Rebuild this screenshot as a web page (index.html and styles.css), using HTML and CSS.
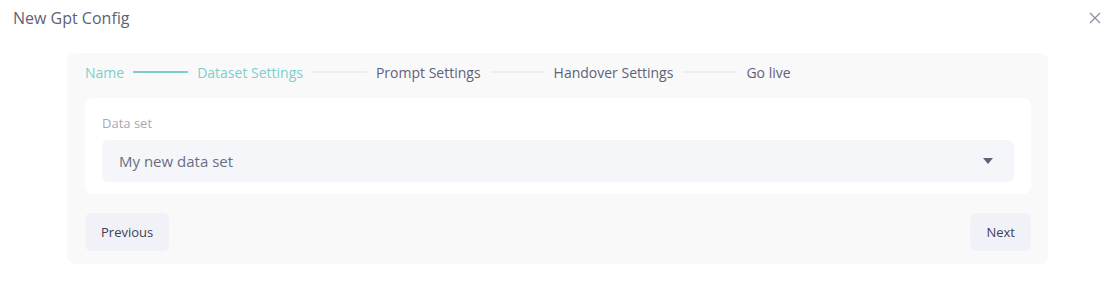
FILE: index.html
```html
<!DOCTYPE html>
<html lang="en">
<head>
  <meta charset="UTF-8" />
  <title>New Gpt Config</title>
  <link rel="stylesheet" href="styles.css">
</head>
<body>
  <div class="modal">
    <div class="modal-head">
      <h2 class="modal-title">New Gpt Config</h2>
      <button class="close-btn" aria-label="Close">
        <svg width="12" height="12" viewBox="0 0 12 12"><path d="M1 1L11 11M11 1L1 11" stroke="#8a8fa3" stroke-width="1.3" fill="none"/></svg>
      </button>
    </div>

    <div class="wizard">
      <div class="steps">
        <span class="step done">Name</span>
        <span class="step-line done"></span>
        <span class="step done">Dataset Settings</span>
        <span class="step-line"></span>
        <span class="step">Prompt Settings</span>
        <span class="step-line"></span>
        <span class="step">Handover Settings</span>
        <span class="step-line"></span>
        <span class="step">Go live</span>
      </div>

      <div class="panel">
        <label class="field-label">Data set</label>
        <div class="select">
          <span>My new data set</span>
          <svg width="10" height="6" viewBox="0 0 10 6"><path d="M0 0H10L5 6Z" fill="#5e6278"/></svg>
        </div>
      </div>

      <div class="actions">
        <button class="btn">Previous</button>
        <button class="btn">Next</button>
      </div>
    </div>
  </div>
</body>
</html>
```

FILE: styles.css
```css
body { margin: 0; background: #fff; font-family: "Open Sans", sans-serif; }
.modal { padding: 0 0 29px 0; }
.modal-head { display: flex; align-items: center; justify-content: space-between; height: 36px; padding: 0 14px 0 13px; }
.modal-title { margin: 0; font-size: 16px; font-weight: 500; color: #5e6278; }
.close-btn { background: none; border: none; padding: 0; width: 12px; height: 12px; display: flex; cursor: pointer; }

.wizard { margin: 17px 67px 0 67px; width: 981px; box-sizing: border-box; background: #f9f9fa; border-radius: 8px; padding: 9px 17px 13px 18px; }
.steps { display: flex; align-items: center; height: 20px; font-size: 14px; color: #5e6278; }
.step { white-space: nowrap; }
.step.done { color: #7ccfcb; }
.step-line { width: 55px; height: 2px; background: #eceef4; margin: 0 9px; }
.step-line.done { background: #7ccfcb; }

.panel { margin-top: 16px; background: #fff; border-radius: 8px; padding: 16px 17px 12px 17px; }
.field-label { display: block; font-size: 13px; color: #a6a8b5; line-height: 18px; margin-bottom: 8px; }
.select { display: flex; align-items: center; justify-content: space-between; height: 42px; background: #f5f6fa; border-radius: 6px; padding: 0 21px 0 17px; font-size: 15px; color: #6b6e80; }

.actions { display: flex; justify-content: space-between; margin-top: 19px; }
.btn { background: #f1f1f8; border: none; border-radius: 6px; height: 38px; padding: 0 16px; font-family: "Open Sans", sans-serif; font-size: 13px; color: #3f4254; cursor: pointer; }
```
